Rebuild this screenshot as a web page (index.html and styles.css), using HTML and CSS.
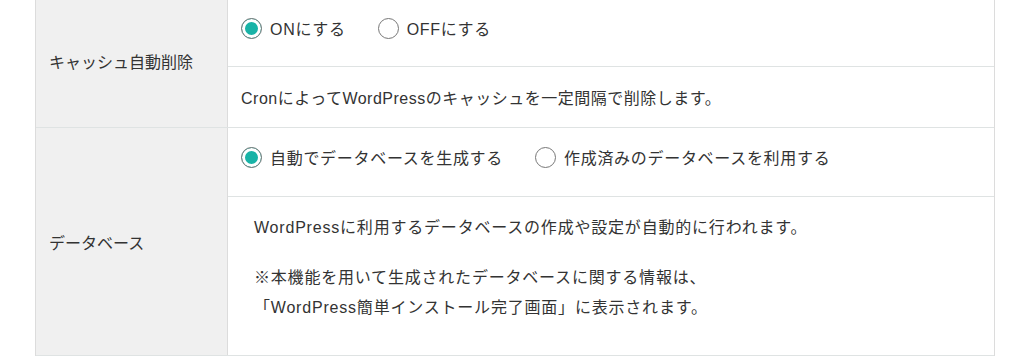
FILE: index.html
```html
<!DOCTYPE html>
<html lang="ja">
<head>
    <meta charset="UTF-8">
    <meta name="viewport" content="width=device-width, initial-scale=1.0">
    <title>WordPress簡単インストール</title>
    <link rel="stylesheet" href="styles.css">
</head>
<body>
<div class="settings">
    <div class="row">
        <div class="label">キャッシュ自動削除</div>
        <div class="body">
            <div class="choice choice-cache">
                <label class="radio"><input type="radio" name="cache" checked><span>ONにする</span></label>
                <label class="radio"><input type="radio" name="cache"><span>OFFにする</span></label>
            </div>
            <div class="note">CronによってWordPressのキャッシュを一定間隔で削除します。</div>
        </div>
    </div>
    <div class="row">
        <div class="label">データベース</div>
        <div class="body">
            <div class="choice choice-db">
                <label class="radio"><input type="radio" name="db" checked><span>自動でデータベースを生成する</span></label>
                <label class="radio"><input type="radio" name="db"><span>作成済みのデータベースを利用する</span></label>
            </div>
            <div class="note note-db">
                <p>WordPressに利用するデータベースの作成や設定が自動的に行われます。</p>
                <p>※本機能を用いて生成されたデータベースに関する情報は、<br>「WordPress簡単インストール完了画面」に表示されます。</p>
            </div>
        </div>
    </div>
</div>
</body>
</html>
```

FILE: styles.css
```css
body {
    margin: 0;
    background-color: #fff;
    color: #333;
    font-family: "Liberation Sans", "Noto Sans CJK JP", sans-serif;
    font-size: 16px;
}
.settings {
    box-sizing: border-box;
    width: 960px;
    margin: -6px 0 0 35px;
    border-left: 1px solid #dcdcdc;
    border-right: 1px solid #dcdcdc;
}
.row {
    display: flex;
    border-bottom: 1px solid #dfe3e3;
}
.label {
    box-sizing: border-box;
    width: 192px;
    flex: none;
    display: flex;
    align-items: center;
    padding-left: 13px;
    background-color: #f0f0f0;
    border-right: 1px solid #dcdcdc;
}
.body {
    flex: 1;
}
.choice {
    box-sizing: border-box;
    display: flex;
    align-items: center;
    gap: 32px;
    padding-left: 13px;
    border-bottom: 1px solid #dfe3e3;
    letter-spacing: 0.7px;
}
.choice-cache {
    height: 73px;
    padding-bottom: 4px;
}
.choice-db {
    height: 69px;
    padding-bottom: 10px;
}
.radio {
    display: flex;
    align-items: center;
    cursor: pointer;
}
.radio input {
    appearance: none;
    -webkit-appearance: none;
    box-sizing: border-box;
    width: 21px;
    height: 21px;
    margin: 0 8px 0 0;
    border: 1.5px solid #777;
    border-radius: 50%;
    background-color: #fff;
}
.radio input:checked {
    background-color: #19b3a7;
    box-shadow: inset 0 0 0 3px #fff;
}
.note {
    height: 60px;
    display: flex;
    align-items: center;
    padding-left: 13px;
    letter-spacing: 0.5px;
}
.note-db {
    height: auto;
    display: block;
    padding: 16px 0 32px 26px;
    line-height: 30px;
    letter-spacing: 0.8px;
}
.note-db p {
    margin: 0;
}
.note-db p + p {
    margin-top: 20px;
}
```
